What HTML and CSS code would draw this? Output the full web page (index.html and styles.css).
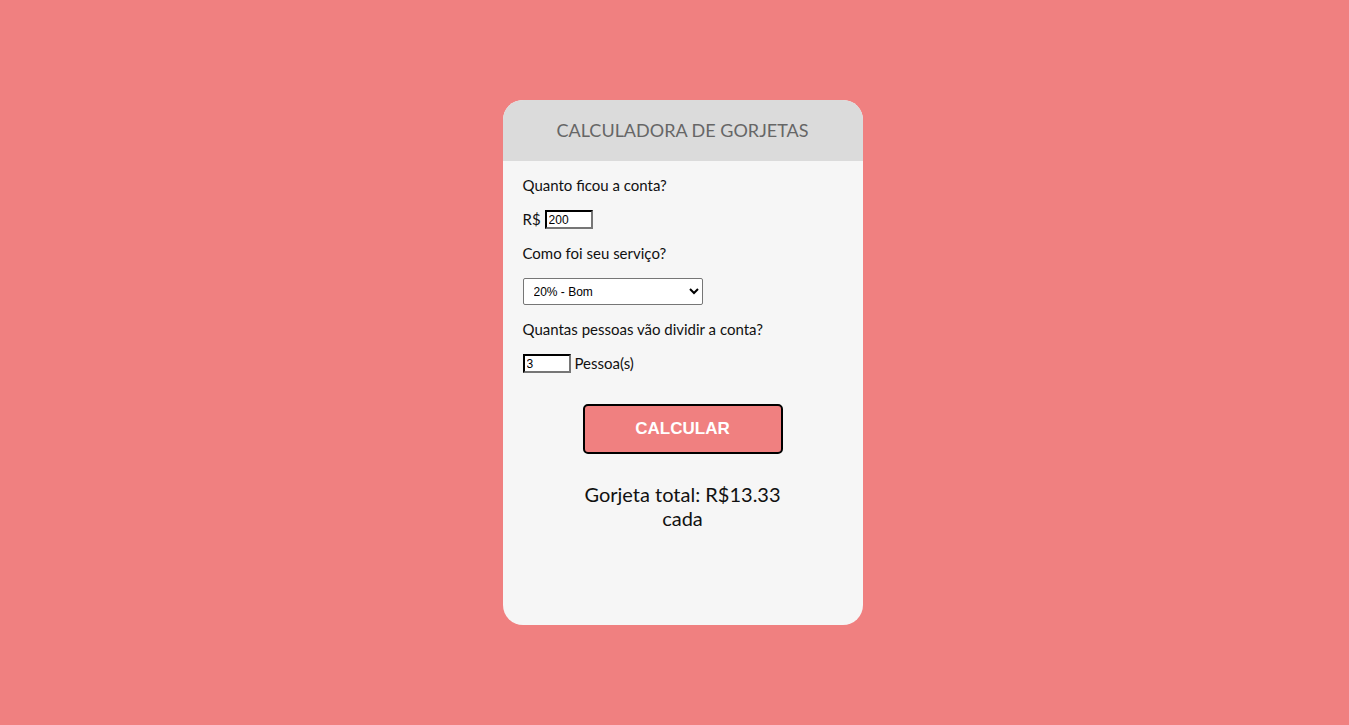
FILE: index.html
```html
<!DOCTYPE html>
<html lang="pt-BR">
<head>
<meta charset="utf-8">
<title>Calculadora de Gorjetas</title>
<link rel="stylesheet" href="styles.css">
</head>
<body>
<div class="card">
  <div class="card-header">
    <h1 class="title">CALCULADORA DE GORJETAS</h1>
  </div>
  <div class="card-body">
    <p class="label">Quanto ficou a conta?</p>
    <div class="row row-bill">
      <span class="text">R$</span>
      <input class="num-input" type="text" value="200">
    </div>
    <p class="label">Como foi seu serviço?</p>
    <div class="row row-select">
      <select class="service">
        <option>20% - Bom</option>
      </select>
    </div>
    <p class="label">Quantas pessoas vão dividir a conta?</p>
    <div class="row row-people">
      <input class="num-input" type="text" value="3">
      <span class="text">Pessoa(s)</span>
    </div>
    <div class="btn-wrap">
      <button class="btn">CALCULAR</button>
    </div>
    <div class="result">Gorjeta total: R$13.33 cada</div>
  </div>
</div>
</body>
</html>
```
FILE: styles.css
```css
html, body {
  margin: 0;
  padding: 0;
}
body {
  background: #f08080;
  font-family: Lato, "Liberation Sans", sans-serif;
  min-height: 725px;
  padding-left: 16px;
  box-sizing: border-box;
  display: flex;
  justify-content: center;
  align-items: flex-start;
}
.card {
  margin-top: 100px;
  width: 360px;
  height: 525px;
  background: #f6f6f6;
  border-radius: 20px;
  overflow: hidden;
  display: flex;
  flex-direction: column;
}
.card-header {
  background: #dbdbdb;
  height: 61px;
  padding-bottom: 1px;
  box-sizing: border-box;
  display: flex;
  align-items: center;
  justify-content: center;
}
.title {
  margin: 0;
  font-size: 18px;
  font-weight: normal;
  color: #666666;
  line-height: 22px;
}
.card-body {
  padding: 15px 20px 0;
  display: flex;
  flex-direction: column;
  color: #111;
}
.label {
  margin: 0;
  font-size: 15px;
  line-height: 18px;
}
.row {
  display: flex;
  align-items: center;
  gap: 4px;
  font-size: 15px;
  line-height: 19px;
}
.row-bill { margin: 16px 0 15px; }
.row-select { margin: 16px 0 15px; }
.row-people { margin: 16px 0 0; }
.num-input {
  box-sizing: border-box;
  width: 48px;
  height: 19px;
  padding: 1px 2px;
  border: 2px inset #767676;
  border-color: #222 #767676 #767676 #222;
  font-family: Arial, "Liberation Sans", sans-serif;
  font-size: 12px;
  background: #fff;
  color: #000;
}
.service {
  box-sizing: border-box;
  width: 180px;
  height: 27px;
  padding: 0 6px;
  border: 1px solid #767676;
  border-radius: 2px;
  background: #fff;
  font-family: Arial, "Liberation Sans", sans-serif;
  font-size: 12px;
  color: #000;
}
.btn-wrap {
  display: flex;
  justify-content: center;
  margin-top: 31px;
}
.btn {
  width: 200px;
  height: 50px;
  background: #f08080;
  border: 2px solid #000;
  border-radius: 5px;
  color: #fff;
  font-family: Arial, "Liberation Sans", sans-serif;
  font-weight: bold;
  font-size: 17px;
}
.result {
  margin: 28px auto 0;
  width: 210px;
  text-align: center;
  font-size: 20px;
  line-height: 24px;
  color: #111;
}
```
